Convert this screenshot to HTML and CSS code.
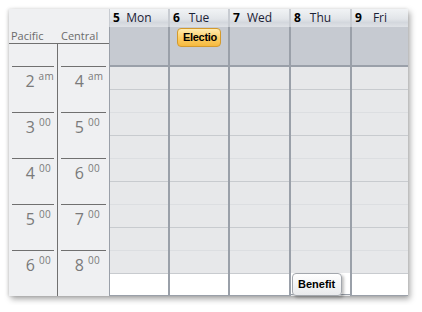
FILE: index.html
```html
<!DOCTYPE html>
<html>
<head>
  <meta charset="UTF-8">
  <title>Week View</title>
  <link rel="stylesheet" href="styles.css">
</head>
<body>
<div class="frame">
  <div class="tz pacific">
    <div class="tz-head">Pacific</div>
    <div class="tz-body">
      <div class="lead"></div>
      <div class="hr"><span class="num">2</span><span class="sup">am</span></div>
      <div class="hr"><span class="num">3</span><span class="sup">00</span></div>
      <div class="hr"><span class="num">4</span><span class="sup">00</span></div>
      <div class="hr"><span class="num">5</span><span class="sup">00</span></div>
      <div class="hr"><span class="num">6</span><span class="sup">00</span></div>
    </div>
  </div>
  <div class="tz central">
    <div class="tz-head">Central</div>
    <div class="tz-body">
      <div class="lead"></div>
      <div class="hr"><span class="num">4</span><span class="sup">am</span></div>
      <div class="hr"><span class="num">5</span><span class="sup">00</span></div>
      <div class="hr"><span class="num">6</span><span class="sup">00</span></div>
      <div class="hr"><span class="num">7</span><span class="sup">00</span></div>
      <div class="hr"><span class="num">8</span><span class="sup">00</span></div>
    </div>
  </div>

  <div class="day first">
    <div class="date"><b>5</b><span>Mon</span></div>
    <div class="allday"></div>
    <div class="slots">
      <div class="s"></div><div class="s"></div><div class="s"></div>
      <div class="s"></div><div class="s"></div><div class="s"></div>
      <div class="s"></div><div class="s"></div><div class="s"></div>
      <div class="s work"></div>
    </div>
  </div>
  <div class="day">
    <div class="date"><b>6</b><span>Tue</span></div>
    <div class="allday"><div class="appt election" title="Election">Electio</div></div>
    <div class="slots">
      <div class="s"></div><div class="s"></div><div class="s"></div>
      <div class="s"></div><div class="s"></div><div class="s"></div>
      <div class="s"></div><div class="s"></div><div class="s"></div>
      <div class="s work"></div>
    </div>
  </div>
  <div class="day">
    <div class="date"><b>7</b><span>Wed</span></div>
    <div class="allday"></div>
    <div class="slots">
      <div class="s"></div><div class="s"></div><div class="s"></div>
      <div class="s"></div><div class="s"></div><div class="s"></div>
      <div class="s"></div><div class="s"></div><div class="s"></div>
      <div class="s work"></div>
    </div>
  </div>
  <div class="day">
    <div class="date"><b>8</b><span>Thu</span></div>
    <div class="allday"></div>
    <div class="slots">
      <div class="s"></div><div class="s"></div><div class="s"></div>
      <div class="s"></div><div class="s"></div><div class="s"></div>
      <div class="s"></div><div class="s"></div><div class="s"></div>
      <div class="s work"><div class="appt benefit">Benefit</div></div>
    </div>
  </div>
  <div class="day">
    <div class="date"><b>9</b><span>Fri</span></div>
    <div class="allday"></div>
    <div class="slots">
      <div class="s"></div><div class="s"></div><div class="s"></div>
      <div class="s"></div><div class="s"></div><div class="s"></div>
      <div class="s"></div><div class="s"></div><div class="s"></div>
      <div class="s work"></div>
    </div>
  </div>
</div>
</body>
</html>
```

FILE: styles.css
```css
body { margin: 0; padding: 9px; background: #fff; font-family: "Open Sans", "Noto Sans", sans-serif; }

.frame {
  width: 399px; height: 287px;
  display: grid;
  grid-template-columns: 49px 51px 59px 60px 61px 61px 1fr;
  background: #eff0f2;
  box-shadow: 2px 3px 6px rgba(0,0,0,0.35), -1px 0 3px rgba(0,0,0,0.12);
}

/* time zone columns */
.tz { display: flex; flex-direction: column; overflow: hidden; }
.tz-head {
  height: 57px; display: flex; align-items: flex-end;
  font-size: 11px; line-height: 14px; color: #6b6b6b;
  border-bottom: 1px solid #707070;
}
.pacific .tz-head { padding-left: 2px; }
.central .tz-head { padding-left: 3px; }
.pacific .tz-body { border-right: 1px solid #707070; }
.tz-body { flex: 1; }
.lead { height: 22px; }
.hr {
  height: 46px; box-sizing: border-box;
  margin: 0 3px; border-top: 1px solid #707070;
  display: flex; align-items: flex-start; padding-top: 6px;
  color: #7a7a7a;
}
.num { width: 23px; text-align: right; font-size: 16px; line-height: 16px; }
.sup { margin-left: 4px; margin-top: -2px; font-size: 10px; line-height: 10px; letter-spacing: 0.3px; }

/* day columns */
.day { display: flex; flex-direction: column; }
.date {
  height: 18px;
  display: grid; grid-template-columns: 1fr auto 1fr;
  font-size: 12px; line-height: 18px;
  background: linear-gradient(#f1f3f5, #e2e5e9 55%, #d3d7dd 75%, #dfe2e6);
  border-left: 2px solid #c8ccd2;
}
.date b { padding-left: 3px; color: #000; }
.date span { color: #1b2236; }
.allday {
  height: 38px; background: #c6cad1;
  border-left: 2px solid #9aa0a9;
  border-bottom: 2px solid #9aa0a9;
}
.slots { flex: 1; background: #e7e8ea; border-left: 2px solid #9aa0a9; }
.s { height: 22px; border-bottom: 1px solid #c8cbcf; }
.s:nth-child(even) { border-bottom-color: #dcdee1; }
.s.work { height: 21px; background: #fff; border-bottom: 1px solid #9aa0a9; }
.first .date, .first .allday, .first .slots { border-left-width: 1px; }

/* appointments */
.appt {
  box-sizing: border-box; white-space: nowrap;
  font-family: "Liberation Sans", Arial, sans-serif;
  font-weight: bold; font-size: 11px; color: #000;
  border-radius: 4px;
}
.election {
  width: 44px; height: 19px; margin: 1px 0 0 7px;
  padding-left: 5px; line-height: 17px; letter-spacing: -0.3px;
  background: linear-gradient(#ffecb0, #fdd06a 50%, #f6b93e);
  border: 1px solid #d49a2c;
}
.benefit {
  width: 50px; height: 23px; margin: -1px 0 0 1px;
  padding-left: 5px; line-height: 20px;
  background: linear-gradient(#ffffff, #e9eaec);
  border: 1px solid #a3a7ad;
  box-shadow: 2px 2px 3px rgba(0,0,0,0.25);
  position: relative;
}
```
